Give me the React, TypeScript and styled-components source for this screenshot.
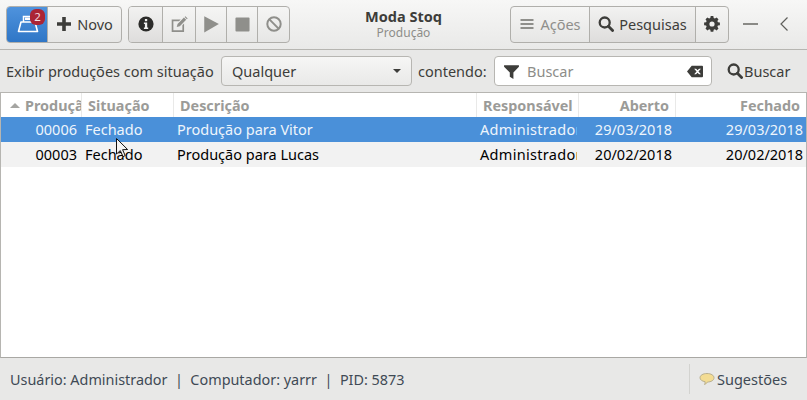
import { type ReactElement, type ReactNode } from "react";
import styled, { createGlobalStyle } from "styled-components";

const GlobalStyle = createGlobalStyle`
  html, body {
    margin: 0;
    padding: 0;
    background: #e8e8e7;
  }
  * {
    box-sizing: border-box;
  }
`;

const Window = styled.div`
  position: relative;
  width: 807px;
  height: 400px;
  display: flex;
  flex-direction: column;
  overflow: hidden;
  background: #e8e8e7;
  color: #3d3d3a;
  font-family: "Noto Sans", "Open Sans", sans-serif;
  font-size: 14.5px;
`;

const HeaderBar = styled.header`
  height: 50px;
  flex: none;
  display: flex;
  align-items: center;
  padding: 0 0 1px 6px;
  background: linear-gradient(#f7f7f6, #e9e9e8);
  border-bottom: 1px solid #b6b5b1;
`;

const ButtonGroup = styled.div<{ $gap?: number }>`
  display: flex;
  height: 37px;
  margin-right: ${(p) => p.$gap ?? 0}px;
  border: 1px solid #b0afab;
  border-radius: 4px;
  overflow: hidden;
  background: linear-gradient(#f5f5f4, #e6e6e5);
`;

const GroupButton = styled.div<{ $width: number; $pressed?: boolean; $blue?: boolean; $muted?: boolean }>`
  width: ${(p) => p.$width}px;
  display: flex;
  align-items: center;
  justify-content: center;
  gap: 5px;
  position: relative;
  color: ${(p) => (p.$muted ? "#8f8f8b" : "#3d3d3a")};
  background: ${(p) =>
    p.$blue
      ? "linear-gradient(#4f93dd, #2f76c6)"
      : p.$pressed
        ? "linear-gradient(#f2f2f1, #dedddc)"
        : "transparent"};
  & + & {
    border-left: 1px solid #b0afab;
  }
`;

const Badge = styled.span`
  position: absolute;
  top: 2px;
  left: 23px;
  width: 15px;
  height: 16px;
  border-radius: 6px;
  background: #ab2535;
  color: #f4dfe1;
  font-size: 11.5px;
  line-height: 16px;
  text-align: center;
`;

const TitleBlock = styled.div`
  flex: 1;
  display: flex;
  flex-direction: column;
  align-items: center;
  padding-left: 7px;
  padding-top: 1px;
`;

const AppTitle = styled.strong`
  font-size: 14.5px;
  line-height: 15px;
  font-weight: 700;
  color: #3d3d3a;
`;

const AppSubtitle = styled.span`
  margin-top: 2px;
  font-size: 12px;
  line-height: 14px;
  color: #8d8d89;
`;

const WindowControl = styled.div<{ $width: number }>`
  width: ${(p) => p.$width}px;
  display: flex;
  align-items: center;
  justify-content: center;
`;

const FilterBar = styled.div`
  height: 42px;
  flex: none;
  display: flex;
  align-items: center;
  padding: 0 0 0 6px;
  background: #e8e8e7;
`;

const FilterLabel = styled.span<{ $width: number }>`
  width: ${(p) => p.$width}px;
  flex: none;
  white-space: nowrap;
`;

const Combo = styled.div`
  width: 191px;
  height: 30px;
  margin-right: 6px;
  padding: 0 10px;
  display: flex;
  align-items: center;
  justify-content: space-between;
  border: 1px solid #b7b6b2;
  border-radius: 4px;
  background: linear-gradient(#f6f6f5, #e9e9e8);
`;

const Caret = styled.span`
  width: 0;
  height: 0;
  border-left: 4px solid transparent;
  border-right: 4px solid transparent;
  border-top: 4px solid #3d3d3a;
`;

const SearchEntry = styled.div`
  width: 218px;
  height: 30px;
  margin-right: 15px;
  padding: 0 8px;
  display: flex;
  align-items: center;
  border: 1px solid #b7b6b2;
  border-radius: 4px;
  background: #fff;
  color: #8d8d89;
`;

const SearchPlaceholder = styled.span`
  flex: 1;
  padding-left: 7px;
`;

const SearchButton = styled.div`
  display: flex;
  align-items: center;
  gap: 1px;
`;

const TableFrame = styled.div`
  flex: 1;
  min-height: 0;
  background: #fff;
  border: 1px solid #b6b5b1;
  border-bottom-color: #a9a8a4;
`;

const TABLE_COLUMNS = "80px 92px 303px 102px 97px 1fr";

const TableHead = styled.div`
  height: 24px;
  display: grid;
  grid-template-columns: ${TABLE_COLUMNS};
  background: #fff;
`;

const HeadCell = styled.div<{ $right?: boolean }>`
  display: flex;
  align-items: center;
  justify-content: ${(p) => (p.$right ? "flex-end" : "flex-start")};
  gap: 5px;
  padding: 0 6px;
  overflow: hidden;
  white-space: nowrap;
  color: #9b9b98;
  font-weight: 700;
  font-size: 14.4px;
  & + & {
    border-left: 1px solid #e9e9e8;
  }
`;

const SortArrow = styled.span`
  flex: none;
  width: 0;
  height: 0;
  margin-left: 3px;
  border-left: 5px solid transparent;
  border-right: 5px solid transparent;
  border-bottom: 5px solid #a5a5a2;
`;

const TableRow = styled.div<{ $selected?: boolean }>`
  height: 25px;
  padding-bottom: 2px;
  display: grid;
  grid-template-columns: ${TABLE_COLUMNS};
  align-items: center;
  background: ${(p) => (p.$selected ? "#4a90d9" : "#f2f2f2")};
  color: ${(p) => (p.$selected ? "#eef5fc" : "#000")};
`;

const Cell = styled.div<{ $right?: boolean }>`
  padding: ${(p) => (p.$right ? "0 3px 0 0" : "0 2px 0 4px")};
  text-align: ${(p) => (p.$right ? "right" : "left")};
  overflow: hidden;
  white-space: nowrap;
`;

const IdCell = styled(Cell)`
  padding-right: 4px;
`;

const ClippedCell = styled.div`
  margin-right: 1px;
  padding-left: 4px;
  overflow: hidden;
  white-space: nowrap;
  letter-spacing: 0.3px;
`;

const StatusBar = styled.footer`
  height: 42px;
  flex: none;
  display: flex;
  align-items: center;
  justify-content: space-between;
  padding-left: 10px;
  background: #e8e8e7;
  color: #3f4a55;
`;

const StatusText = styled.span`
  font-size: 14.4px;
  white-space: pre;
`;

const Suggestions = styled.div`
  width: 118px;
  height: 30px;
  padding-left: 9px;
  display: flex;
  align-items: center;
  gap: 1px;
  border-left: 1px solid #d3d3d0;
`;

const CursorMark = styled.svg`
  position: absolute;
  left: 115px;
  top: 137px;
`;

function Glyph({ size = 16, color = "#3d3d3a", children }: { size?: number; color?: string; children: ReactNode }): ReactElement {
  return (
    <svg width={size} height={size} viewBox="0 0 16 16" fill={color}>
      {children}
    </svg>
  );
}

function SearchIcon({ color = "#3d3d3a" }: { color?: string }): ReactElement {
  return (
    <Glyph color={color}>
      <circle cx="6.7" cy="6.5" r="5" fill="none" stroke={color} strokeWidth="2.3" />
      <path d="M10.4 10.200l4.200 4.300" stroke={color} strokeWidth="2.8" strokeLinecap="round" />
    </Glyph>
  );
}

const rows = [
  { id: "00006", description: "Produção para Vitor", opened: "29/03/2018", closed: "29/03/2018", selected: true },
  { id: "00003", description: "Produção para Lucas", opened: "20/02/2018", closed: "20/02/2018", selected: false },
];

export default function App(): ReactElement {
  return (
    <Window>
      <GlobalStyle />
      <HeaderBar>
        <ButtonGroup $gap={6}>
          <GroupButton $width={40} $blue>
            <svg width="24" height="22" viewBox="0 0 24 22" fill="none">
              <path d="M3.500 18.500L6 9h14l2.500 9.500z" stroke="#fff" strokeWidth="1.6" strokeLinejoin="round" />
              <path d="M8.500 9V3.500h7" stroke="#fff" strokeWidth="1.500" />
              <rect x="10" y="4.500" width="5" height="2.500" fill="#fff" />
            </svg>
            <Badge>2</Badge>
          </GroupButton>
          <GroupButton $width={74}>
            <Glyph>
              <path d="M6.200 1h3.600v5.200H15v3.600H9.800V15H6.200V9.800H1V6.200h5.200z" />
            </Glyph>
            Novo
          </GroupButton>
        </ButtonGroup>
        <ButtonGroup>
          <GroupButton $width={33} $pressed>
            <svg width="16" height="16" viewBox="0 0 16 16">
              <circle cx="8" cy="8" r="7.6" fill="#2c2c2a" />
              <rect x="6.900" y="3" width="2.300" height="2.200" fill="#f2f2f1" />
              <path d="M5.900 6.600h3.300v5h1v1.300H5.900v-1.300h1V7.900h-1z" fill="#f2f2f1" />
            </svg>
          </GroupButton>
          <GroupButton $width={33}>
            <Glyph size={18} color="#8f8f8b">
              <path d="M1.500 4h8L8 5.500H3v8h8V9l1.500-1.500V15h-11z" />
              <path d="M6 10.600l.7-2.600 5.700-5.700 2 2-5.700 5.700zM13 1.700l.7-.7 2 2-.7.7z" />
            </Glyph>
          </GroupButton>
          <GroupButton $width={31}>
            <Glyph size={18} color="#8f8f8b">
              <path d="M2 1l13 7-13 7.500z" />
            </Glyph>
          </GroupButton>
          <GroupButton $width={31}>
            <Glyph size={15} color="#8f8f8b">
              <rect x="0.500" y="0.500" width="15" height="15" rx="1" />
            </Glyph>
          </GroupButton>
          <GroupButton $width={32}>
            <svg width="16" height="16" viewBox="0 0 16 16" fill="none" stroke="#8f8f8b" strokeWidth="2">
              <circle cx="8" cy="8" r="6.700" />
              <path d="M3.400 3.400l9.200 9.200" />
            </svg>
          </GroupButton>
        </ButtonGroup>
        <TitleBlock>
          <AppTitle>Moda Stoq</AppTitle>
          <AppSubtitle>Produção</AppSubtitle>
        </TitleBlock>
        <ButtonGroup>
          <GroupButton $width={78} $muted>
            <Glyph color="#8f8f8b">
              <path d="M1.500 3h13v2h-13zM1.500 7h13v2h-13zM1.500 11h13v2h-13z" />
            </Glyph>
            Ações
          </GroupButton>
          <GroupButton $width={106} $pressed>
            <SearchIcon />
            Pesquisas
          </GroupButton>
          <GroupButton $width={33}>
            <Glyph>
              <path
                fillRule="evenodd"
                d="M6.700 0h2.600l.4 2 1.200.5 1.700-1.100 1.900 1.900-1.100 1.700.5 1.200 2 .4v2.600l-2 .4-.5 1.200 1.100 1.700-1.900 1.900-1.700-1.100-1.200.5-.4 2H6.700l-.4-2-1.200-.5-1.700 1.100-1.900-1.900 1.100-1.700-.5-1.200-2-.4V6.600l2-.4.5-1.200-1.100-1.700 1.900-1.900 1.700 1.100 1.200-.5zM8 5.400a2.600 2.600 0 100 5.200 2.600 2.600 0 000-5.200z"
              />
            </Glyph>
          </GroupButton>
        </ButtonGroup>
        <WindowControl $width={44}>
          <svg width="16" height="4" viewBox="0 0 16 4">
            <rect y="1" width="15" height="2" fill="#8a8a86" />
          </svg>
        </WindowControl>
        <WindowControl $width={22}>
          <svg width="10" height="16" viewBox="0 0 10 16" fill="none" stroke="#5f5f5b" strokeWidth="1.200">
            <path d="M8.500 1.500L2 8l6.500 6.500" />
          </svg>
        </WindowControl>
        <WindowControl $width={12} />
      </HeaderBar>
      <FilterBar>
        <FilterLabel $width={215}>Exibir produções com situação</FilterLabel>
        <Combo>
          Qualquer
          <Caret />
        </Combo>
        <FilterLabel $width={76}>contendo:</FilterLabel>
        <SearchEntry>
          <Glyph size={17}>
            <path d="M1 2h14v1.500L9.800 9v6l-3.400-2V9L1 3.500z" />
          </Glyph>
          <SearchPlaceholder>Buscar</SearchPlaceholder>
          <svg width="16" height="13" viewBox="0 0 17 13">
            <path
              fill="#3d3d3a"
              fillRule="evenodd"
              d="M5 .5h11a1 1 0 011 1v10a1 1 0 01-1 1H5L0 6.500zM7.600 3.500l2.600 3-2.600 3h2l1.600-1.800 1.600 1.800h2l-2.600-3 2.600-3h-2l-1.600 1.800-1.600-1.800z"
            />
          </svg>
        </SearchEntry>
        <SearchButton>
          <SearchIcon />
          Buscar
        </SearchButton>
      </FilterBar>
      <TableFrame>
        <TableHead>
          <HeadCell>
            <SortArrow />
            Produção
          </HeadCell>
          <HeadCell>Situação</HeadCell>
          <HeadCell>Descrição</HeadCell>
          <HeadCell>Responsável</HeadCell>
          <HeadCell $right>Aberto</HeadCell>
          <HeadCell $right>Fechado</HeadCell>
        </TableHead>
        {rows.map((row) => (
          <TableRow key={row.id} $selected={row.selected}>
            <IdCell $right>{row.id}</IdCell>
            <Cell>Fechado</Cell>
            <Cell>{row.description}</Cell>
            <ClippedCell>Administrador</ClippedCell>
            <Cell $right>{row.opened}</Cell>
            <Cell $right>{row.closed}</Cell>
          </TableRow>
        ))}
      </TableFrame>
      <StatusBar>
        <StatusText>Usuário: Administrador  |  Computador: yarrr  |  PID: 5873</StatusText>
        <Suggestions>
          <svg width="17" height="15" viewBox="0 0 17 15">
            <path
              d="M8 1.500c4 0 7 1.800 7 4.300s-3 4.200-6.500 4.200c-.6 1-1.600 2-3 2.500.5-.8.7-1.700.6-2.800C3.200 9.300 1 7.800 1 5.800 1 3.300 4 1.500 8 1.500z"
              fill="#f3dc93"
              stroke="#b9b08f"
            />
          </svg>
          Sugestões
        </Suggestions>
      </StatusBar>
      <CursorMark width="16" height="22" viewBox="0 0 16 22">
        <path d="M1.500 1.500v15.500l3.800-3.400 2.700 6 2.200-1-2.600-5.900 5-.2z" fill="#f4f4f4" stroke="#111" strokeWidth="1" />
      </CursorMark>
    </Window>
  );
}
